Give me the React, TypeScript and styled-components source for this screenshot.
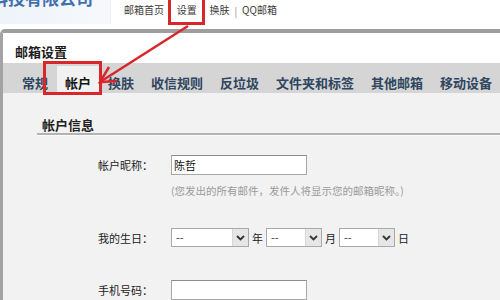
import React from "react";
import styled, { createGlobalStyle } from "styled-components";

const Global = createGlobalStyle`
  html, body { margin: 0; padding: 0; background: #fff; }
  body {
    width: 500px; height: 300px; overflow: hidden;
    font-family: "Noto Sans CJK SC", "Noto Sans", "Liberation Sans", sans-serif;
  }
`;

const Page = styled.div`
  position: relative;
  width: 500px;
  height: 300px;
  overflow: hidden;
  background: #fff;
`;

const Header = styled.header`
  display: flex;
  align-items: flex-start;
  height: 29px;
`;

const Logo = styled.div`
  width: 110px;
  height: 24px;
  overflow: hidden;
  background: linear-gradient(to right, #eef3f9, #f7f9fc);
  border-right: 1px solid #eceff3;
`;

const LogoText = styled.div`
  margin: -13px 0 0 -9px;
  font-size: 17px;
  line-height: 22px;
  font-weight: bold;
  color: #3f70ad;
  white-space: nowrap;
`;

const Nav = styled.nav`
  display: flex;
  align-items: center;
  padding-left: 13px;
  height: 20px;
  font-size: 10px;
  color: #3a3a3a;
`;

const NavLink = styled.span<{ $marked?: boolean }>`
  position: relative;
  line-height: 20px;
  &::after {
    content: "";
    display: ${(p) => (p.$marked ? "block" : "none")};
    position: absolute;
    left: -9px;
    right: -8px;
    top: -6px;
    bottom: -5px;
    border: 3px solid #d8262b;
  }
`;

const Sep = styled.span`
  margin: 0 5px;
  color: #8a8a8a;
`;

const Panel = styled.section`
  border-top: 4px solid #9e9e9e;
  border-left: 3px solid #a3a3a3;
  border-top-left-radius: 5px;
  height: 267px;
  display: flex;
  flex-direction: column;
`;

const PanelHead = styled.div`
  height: 31px;
  box-sizing: border-box;
  padding: 11px 0 0 12px;
  background: #fff;
`;

const Title = styled.h1`
  margin: 0;
  font-size: 13px;
  line-height: 16px;
  font-weight: bold;
  color: #1c1c1c;
`;

const TabBar = styled.div`
  display: flex;
  align-items: flex-end;
  gap: 1px;
  height: 31px;
  padding-left: 11px;
  background: #d5d5d5;
`;

const Tab = styled.div<{ $active?: boolean }>`
  position: relative;
  height: 27px;
  box-sizing: border-box;
  padding: 9px 8px 0;
  font-size: 13px;
  line-height: 16px;
  font-weight: bold;
  white-space: nowrap;
  color: ${(p) => (p.$active ? "#141414" : "#2e465f")};
  background: ${(p) => (p.$active ? "#f1f1f1" : "transparent")};
  &::after {
    content: "";
    display: ${(p) => (p.$active ? "block" : "none")};
    position: absolute;
    left: -14px;
    right: -3px;
    top: -5px;
    bottom: -2px;
    border: 3px solid #d8262b;
  }
`;

const Content = styled.div`
  flex: 1;
  background: #f2f2f2;
  padding: 24px 0 0 34px;
`;

const SectionTitle = styled.h2`
  margin: 0;
  padding-left: 5px;
  font-size: 13px;
  line-height: 16px;
  font-weight: bold;
  color: #222;
  border-bottom: 2px solid #b3b3b3;
  box-shadow: 0 1px 0 #fbfbfb;
`;

const Row = styled.div<{ $top: number }>`
  display: flex;
  align-items: center;
  margin-top: ${(p) => p.$top}px;
`;

const Label = styled.label`
  width: 116px;
  margin-right: 18px;
  text-align: right;
  font-size: 11px;
  color: #222;
  white-space: nowrap;
`;

const TextInput = styled.input`
  width: 136px;
  height: 20px;
  box-sizing: border-box;
  margin: 0;
  padding: 0 2px;
  border: 1px solid #a8a8a8;
  border-top-color: #8e8e8e;
  background: #fff;
  font-family: inherit;
  font-size: 11px;
  color: #111;
  outline: none;
`;

const Hint = styled.div<{ $top: number }>`
  margin: ${(p) => p.$top}px 0 0 134px;
  font-size: 10.5px;
  line-height: 14px;
  color: #9a9a9a;
  white-space: nowrap;
`;

const Select = styled.div<{ $w: number }>`
  display: flex;
  align-items: stretch;
  width: ${(p) => p.$w}px;
  height: 19px;
  box-sizing: border-box;
  border: 1px solid #a9a9a9;
  background: #fff;
`;

const SelectValue = styled.span`
  flex: 1;
  padding-left: 4px;
  font-size: 11px;
  line-height: 17px;
  color: #333;
`;

const SelectButton = styled.span`
  width: 15px;
  display: flex;
  align-items: center;
  justify-content: center;
  background: #e6e6e6;
  border-left: 1px solid #d8d8d8;
`;

const Unit = styled.span`
  margin: 0 3px;
  font-size: 11px;
  color: #222;
`;

const Overlay = styled.svg`
  position: absolute;
  left: 0;
  top: 0;
  pointer-events: none;
`;

const Chevron = () => (
  <svg width="9" height="6" viewBox="0 0 9 6">
    <path d="M1 1 L4.5 4.5 L8 1" fill="none" stroke="#333" strokeWidth="1.8" />
  </svg>
);

const FakeSelect = ({ w }: { w: number }) => (
  <Select $w={w}>
    <SelectValue>--</SelectValue>
    <SelectButton>
      <Chevron />
    </SelectButton>
  </Select>
);

const tabs = ["常规", "帐户", "换肤", "收信规则", "反垃圾", "文件夹和标签", "其他邮箱", "移动设备"];

export default function App() {
  return (
    <Page>
      <Global />
      <Header>
        <Logo>
          <LogoText>科技有限公司</LogoText>
        </Logo>
        <Nav>
          <NavLink>邮箱首页</NavLink>
          <Sep>|</Sep>
          <NavLink $marked>设置</NavLink>
          <Sep>|</Sep>
          <NavLink>换肤</NavLink>
          <Sep>|</Sep>
          <NavLink>QQ邮箱</NavLink>
        </Nav>
      </Header>
      <Panel>
        <PanelHead>
          <Title>邮箱设置</Title>
        </PanelHead>
        <TabBar>
          {tabs.map((t) => (
            <Tab key={t} $active={t === "帐户"}>
              {t}
            </Tab>
          ))}
        </TabBar>
        <Content>
          <SectionTitle>帐户信息</SectionTitle>
          <Row $top={20}>
            <Label>帐户昵称：</Label>
            <TextInput defaultValue="陈哲" />
          </Row>
          <Hint $top={9}>(您发出的所有邮件，发件人将显示您的邮箱昵称。)</Hint>
          <Row $top={30}>
            <Label>我的生日：</Label>
            <FakeSelect w={78} />
            <Unit>年</Unit>
            <FakeSelect w={56} />
            <Unit>月</Unit>
            <FakeSelect w={56} />
            <Unit>日</Unit>
          </Row>
          <Row $top={33}>
            <Label>手机号码：</Label>
            <TextInput />
          </Row>
        </Content>
      </Panel>
      <Overlay width="500" height="300" viewBox="0 0 500 300">
        <line x1="188" y1="26" x2="100" y2="82" stroke="#d8262b" strokeWidth="2.5" />
        <polyline
          points="109,67 100,82 117,81"
          fill="none"
          stroke="#d8262b"
          strokeWidth="2.5"
          strokeLinejoin="miter"
        />
      </Overlay>
    </Page>
  );
}
